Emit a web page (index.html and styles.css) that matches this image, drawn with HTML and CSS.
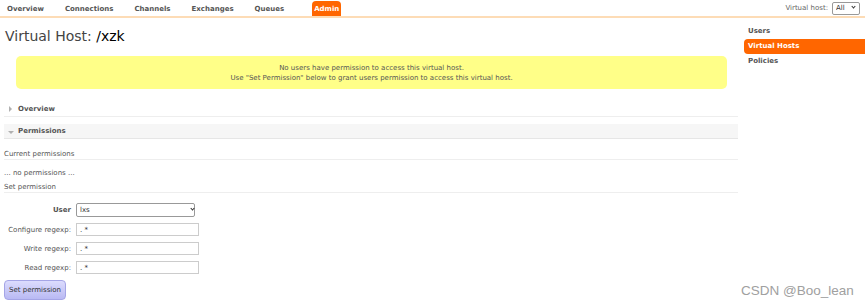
FILE: index.html
```html
<!DOCTYPE html>
<html lang="en">
  <head>
    <meta charset="UTF-8" />
    <title>RabbitMQ Management</title>
    <link rel="stylesheet" href="styles.css">
  </head>

  <body>
    <header class="topbar">
      <ul class="tabs">
        <li><a href="#">Overview</a></li>
        <li><a href="#">Connections</a></li>
        <li><a href="#">Channels</a></li>
        <li><a href="#">Exchanges</a></li>
        <li><a href="#">Queues</a></li>
        <li><a href="#" class="aktiv">Admin</a></li>
      </ul>
      <div class="vhostValg">
        <span>Virtual host:</span>
        <span class="vaelger lille"><select><option>All</option></select></span>
      </div>
    </header>

    <div class="layout">
      <main>
        <h1>Virtual Host: <b>/xzk</b></h1>

        <div class="advarsel">
          No users have permission to access this virtual host.<br />
          Use "Set Permission" below to grant users permission to access this virtual host.
        </div>

        <h2 class="sektion lukket"><span class="pil"></span>Overview</h2>
        <h2 class="sektion aaben"><span class="pil"></span>Permissions</h2>

        <h3>Current permissions</h3>
        <p class="ingen">... no permissions ...</p>
        <h3 class="sidste">Set permission</h3>

        <form class="formular">
          <label class="fed">User</label>
          <span class="vaelger"><select class="bruger"><option>lxs</option></select></span>
          <label>Configure regexp:</label>
          <input type="text" value=". *" />
          <label>Write regexp:</label>
          <input type="text" value=". *" />
          <label>Read regexp:</label>
          <input type="text" value=". *" />
        </form>
        <button class="knap">Set permission</button>
      </main>

      <aside>
        <a href="#">Users</a>
        <a href="#" class="valgt">Virtual Hosts</a>
        <a href="#">Policies</a>
      </aside>
    </div>

    <div class="vandmaerke">CSDN @Boo_lean</div>
  </body>
</html>
```

FILE: styles.css
```css
body {
  margin: 0;
  font-family: "DejaVu Sans", Verdana, sans-serif;
  font-size: 7px;
  color: #555;
  background: white;
}

a {
  text-decoration: none;
  color: #555;
}

.topbar {
  display: flex;
  justify-content: space-between;
  height: 16px;
  border-bottom: 2px solid #fddcb6;
}

.tabs {
  display: flex;
  gap: 13px;
  list-style: none;
  margin: 0;
  padding: 1px 0 0 3px;
}

.tabs a {
  display: block;
  padding: 1px 4px 0;
  line-height: 14px;
  font-weight: bold;
  border-radius: 4px 4px 0 0;
}

.tabs a.aktiv {
  background: #f60;
  color: white;
  margin-left: 11px;
  padding: 1px 2px 0;
}

.vhostValg {
  display: flex;
  align-items: center;
  gap: 4px;
  padding-right: 5px;
  color: #666;
}

/* select med lille pil */
.vaelger {
  position: relative;
  display: inline-block;
}

.vaelger select {
  appearance: none;
  -webkit-appearance: none;
  font-family: inherit;
  font-size: 7px;
  padding: 0 0 0 3px;
  border: 1px solid #999;
  border-radius: 2px;
  background: white;
  color: #333;
}

.vaelger::after {
  content: "";
  position: absolute;
  right: 5px;
  top: 4px;
  width: 2px;
  height: 2px;
  border-right: 1px solid #333;
  border-bottom: 1px solid #333;
  transform: rotate(45deg);
  pointer-events: none;
}

.vaelger.lille select {
  width: 28px;
  height: 13px;
}

.vaelger.lille::after {
  top: 3px;
}

.layout {
  display: flex;
}

main {
  flex: 0 0 734px;
  padding-left: 4px;
}

h1 {
  margin: 9px 0 0 1px;
  font-size: 14px;
  line-height: 18px;
  font-weight: normal;
  color: #444;
}

h1 b {
  font-weight: normal;
  color: #000;
}

.advarsel {
  margin: 11px 11px 0 12px;
  padding: 7px 0 6px;
  background: #ffff88;
  border-radius: 5px;
  text-align: center;
  line-height: 10px;
  color: #555;
}

.sektion {
  margin: 0;
  font-size: 7px;
  font-weight: bold;
  padding-left: 14px;
  position: relative;
  border-bottom: 1px solid #eee;
}

.lukket {
  margin-top: 12px;
  padding-top: 2px;
  line-height: 13px;
}

.aaben {
  margin-top: 7px;
  padding-top: 1px;
  line-height: 13px;
  background: #f6f6f6;
  border-bottom-color: #e6e6e6;
}

.pil {
  position: absolute;
  width: 0;
  height: 0;
}

.lukket .pil {
  left: 5px;
  top: 5px;
  border-top: 3px solid transparent;
  border-bottom: 3px solid transparent;
  border-left: 3px solid #b0b0b0;
}

.aaben .pil {
  left: 4px;
  top: 7px;
  border-left: 3px solid transparent;
  border-right: 3px solid transparent;
  border-top: 3px solid #b0b0b0;
}

h3 {
  margin: 8px 0 0;
  padding-top: 2px;
  font-size: 7px;
  font-weight: normal;
  line-height: 10px;
  border-bottom: 1px solid #eee;
}

h3.sidste {
  margin-top: 2px;
  line-height: 9px;
}

.ingen {
  margin: 7px 0 0;
  line-height: 12px;
}

.formular {
  display: grid;
  grid-template-columns: 67px 123px;
  column-gap: 5px;
  row-gap: 6px;
  align-items: center;
  margin-top: 10px;
}

.formular label {
  text-align: right;
}

.formular .fed {
  font-weight: bold;
}

.bruger {
  width: 119px;
  height: 14px;
}

.formular input {
  box-sizing: border-box;
  height: 13px;
  font-family: inherit;
  font-size: 7px;
  padding: 0 0 0 3px;
  border: 1px solid #ccc;
  color: #333;
}

.knap {
  display: block;
  margin-top: 6px;
  width: 62px;
  height: 20px;
  padding: 0;
  font-family: inherit;
  font-size: 7px;
  color: #333;
  background: linear-gradient(#dcdcfd, #b9b9f3);
  border: 1px solid #a5a5e6;
  border-radius: 4px;
}

aside {
  flex: 1;
  margin-left: 6px;
  padding-top: 6px;
}

aside a {
  display: block;
  line-height: 15px;
  padding-left: 4px;
  font-weight: bold;
}

aside a.valgt {
  background: #f60;
  color: white;
  border-radius: 4px 0 0 4px;
}

.vandmaerke {
  position: absolute;
  left: 741px;
  top: 283px;
  font-family: "Liberation Sans", Arial, sans-serif;
  font-size: 13.5px;
  color: #a0a0a0;
}
```
